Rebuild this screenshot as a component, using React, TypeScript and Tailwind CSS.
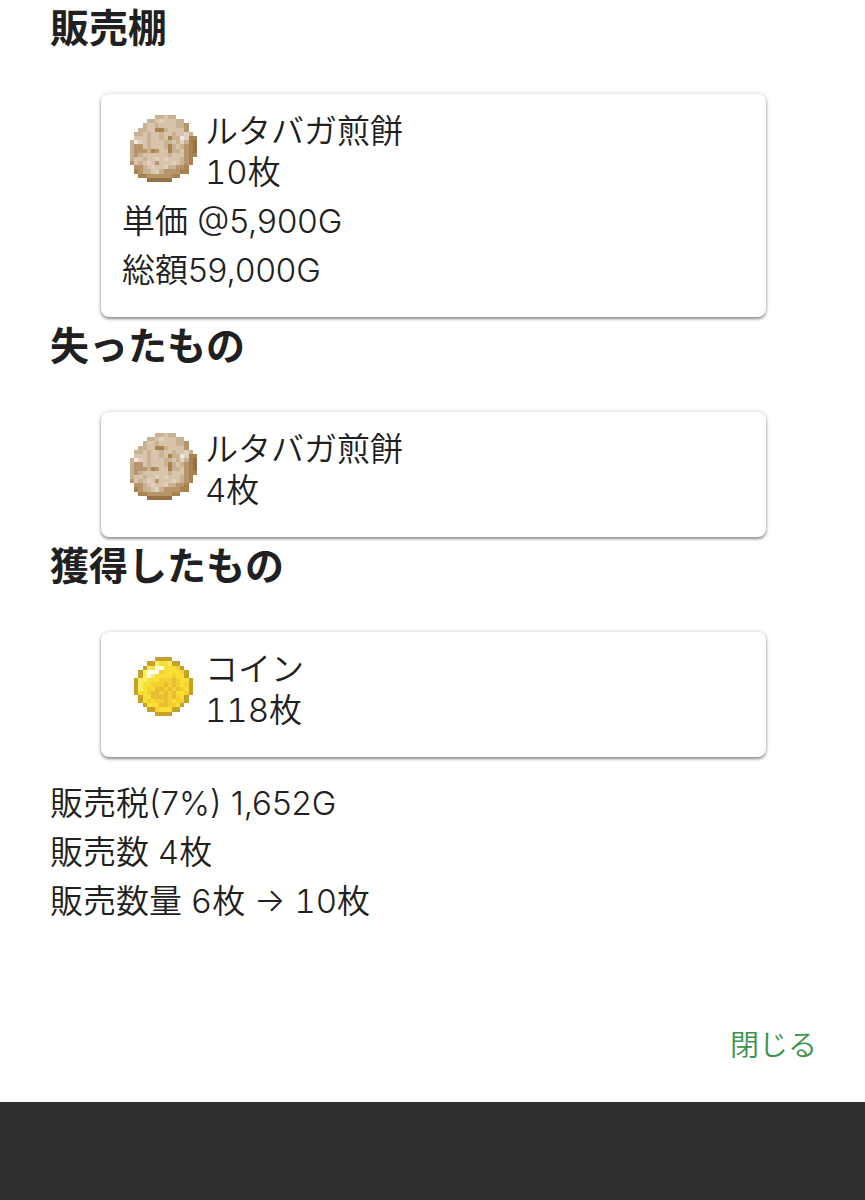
import type { ReactNode } from "react";

const CRACKER_COLORS: Record<string, string> = {
  w: "#f5e7df",
  f: "#e0d0bd",
  a: "#d7c4ab",
  b: "#c9b194",
  c: "#b6956d",
  d: "#a98250",
  e: "#96703f",
};

const CRACKER_ROWS = [
  "......bbabb.....",
  "....bbafaaabb...",
  "...baabaaaabbc..",
  "..bbaaddbaaaac..",
  ".bbabaabaabaafb.",
  ".aaabaabadbbwfdd",
  "bwfabaaabbabfbde",
  "bccabaaabdbabcde",
  "bcccbdcaadbbacde",
  "bcbaaaaaabaaacdd",
  "baabaafafaaabcd.",
  "cabafacaaafabcd.",
  ".ccbafaafbbccd..",
  ".dcbbafbccccdd..",
  "..ddccccccdd....",
  "....eeeeee......",
];

const COIN_COLORS: Record<string, string> = {
  w: "#fffdf0",
  l: "#fbee62",
  y: "#f9df35",
  g: "#f3d02e",
  o: "#e8bd35",
  b: "#c5a127",
};

const COIN_ROWS = [
  "................",
  "......bbbb......",
  "....bblyylbb....",
  "...blywwyyygb...",
  "..blwwwgyyyygb..",
  "..blwlyyyygyyb..",
  ".bllyyygggogyyb.",
  ".blyygggogogygb.",
  ".blygyoogogogyb.",
  ".byygoogogoyygb.",
  "..byyoooogogyb..",
  "..bygyggogyggb..",
  "...byyyooggyb...",
  "....bbgyyybb....",
  "......bbbb......",
  "................",
];

type SpriteProps = {
  rows: string[];
  colors: Record<string, string>;
  label: string;
};

function Sprite({ rows, colors, label }: SpriteProps) {
  return (
    <svg
      viewBox="0 0 16 16"
      shapeRendering="crispEdges"
      role="img"
      aria-label={label}
      className="mt-1 size-[67px] shrink-0"
    >
      {rows.map((row, y) =>
        row
          .split("")
          .map((key, x) =>
            key === "." ? null : (
              <rect
                key={`${x}-${y}`}
                x={x}
                y={y}
                width="1"
                height="1"
                fill={colors[key]}
              />
            ),
          ),
      )}
    </svg>
  );
}

type ItemCardProps = {
  name: string;
  count: string;
  icon: ReactNode;
  children?: ReactNode;
};

function ItemCard({ name, count, icon, children }: ItemCardProps) {
  return (
    <div className="mx-[51px] rounded-lg bg-white px-[21px] pt-[17px] pb-[22px] shadow-[0_2px_3px_rgba(0,0,0,0.4),0_0_5px_rgba(0,0,0,0.16)]">
      <div className="mb-1 flex gap-2 pl-2">
        <div className="shrink-0">{icon}</div>
        <div className="leading-[41px]">
          <p>{name}</p>
          <p className="tabular-nums">{count}</p>
        </div>
      </div>
      {children}
    </div>
  );
}

function Section({ title, children }: { title: string; children: ReactNode }) {
  return (
    <section className="mt-px first:mt-0">
      <h2 className="mb-[38px] text-[39px] leading-[56px] font-bold">{title}</h2>
      {children}
    </section>
  );
}

export default function App() {
  const cracker = (
    <Sprite rows={CRACKER_ROWS} colors={CRACKER_COLORS} label="ルタバガ煎餅" />
  );
  const coin = <Sprite rows={COIN_ROWS} colors={COIN_COLORS} label="コイン" />;

  return (
    <div className="min-h-screen bg-[#303030]">
      <main className="bg-white pr-[48px] pb-8 pl-[50px] font-['Inter','Noto_Sans_CJK_JP',sans-serif] text-[33px] leading-[49px] font-[350] text-[#202020]">
        <Section title="販売棚">
          <ItemCard name="ルタバガ煎餅" count="10枚" icon={cracker}>
            <p>単価 @5,900G</p>
            <p>総額59,000G</p>
          </ItemCard>
        </Section>
        <Section title="失ったもの">
          <ItemCard name="ルタバガ煎餅" count="4枚" icon={cracker} />
        </Section>
        <Section title="獲得したもの">
          <ItemCard name="コイン" count="118枚" icon={coin} />
        </Section>

        <div className="mt-[22px]">
          <p>販売税(7%) 1,652G</p>
          <p className="tabular-nums">販売数 4枚</p>
          <p className="tabular-nums">販売数量 6枚 → 10枚</p>
        </div>

        <div className="mt-[95px] flex justify-end">
          <button type="button" className="text-[29px] text-[#3b944b]">
            閉じる
          </button>
        </div>
      </main>
    </div>
  );
}
